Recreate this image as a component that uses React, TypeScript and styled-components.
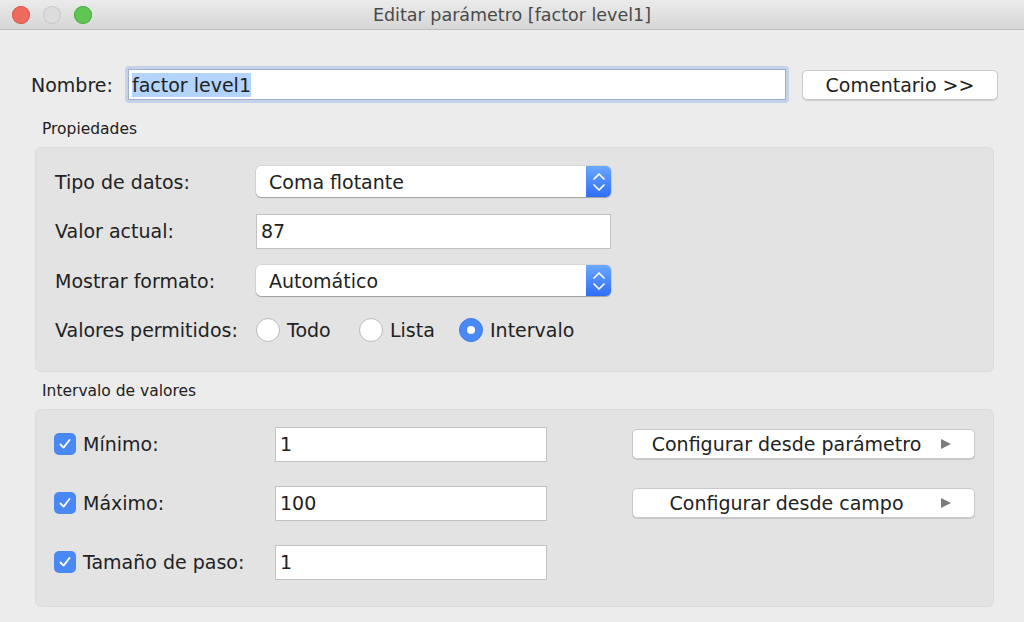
import React from "react";
import styled, { createGlobalStyle } from "styled-components";

const GlobalStyle = createGlobalStyle`
  html, body {
    margin: 0;
    padding: 0;
    background: #ececec;
  }
  body {
    font-family: "DejaVu Sans", "Liberation Sans", sans-serif;
    color: #222;
  }
`;

const Window = styled.div`
  width: 1024px;
  height: 622px;
  display: flex;
  flex-direction: column;
  background: #ececec;
  overflow: hidden;
`;

const TitleBar = styled.div`
  height: 30px;
  flex-shrink: 0;
  display: grid;
  grid-template-columns: 1fr auto 1fr;
  align-items: center;
  background: linear-gradient(#ebebeb, #d6d6d6);
  border-bottom: 1px solid #bdbdbd;
  box-sizing: border-box;
`;

const Lights = styled.div`
  display: flex;
  gap: 13px;
  padding-left: 12px;
`;

const Light = styled.span<{ $color: string; $edge: string }>`
  width: 18px;
  height: 18px;
  border-radius: 50%;
  background: ${(p) => p.$color};
  box-shadow: inset 0 0 0 1px ${(p) => p.$edge};
`;

const Title = styled.div`
  font-size: 17.5px;
  color: #4a4a4a;
`;

const Body = styled.div`
  padding: 36px 30px 0 35px;
  display: flex;
  flex-direction: column;
`;

const NameRow = styled.div`
  display: flex;
  align-items: center;
  margin-right: -4px;
`;

const NameLabel = styled.label`
  font-size: 19px;
  margin-left: -4px;
  width: 94px;
`;

const FocusRing = styled.div`
  flex: 1;
  padding: 3px;
  border-radius: 4px;
  background: #c5d3ea;
  margin-right: 13px;
`;

const NameInput = styled.div`
  height: 29px;
  background: #fff;
  border: 1px solid #9fb0ca;
  display: flex;
  align-items: center;
  padding-left: 3px;
  font-size: 19px;
`;

const Selected = styled.span`
  background: #b3d4fc;
  line-height: 24px;
`;

const PushButton = styled.div<{ $width: number }>`
  width: ${(p) => p.$width}px;
  height: 30px;
  box-sizing: border-box;
  background: #fff;
  border: 1px solid #c9c9c9;
  border-radius: 5px;
  box-shadow: 0 1px 0 rgba(0, 0, 0, 0.12);
  display: flex;
  align-items: center;
  font-size: 19px;
  color: #222;
`;

const ButtonText = styled.span`
  flex: 1;
  text-align: center;
`;

const Arrow = styled.svg`
  margin-right: 22px;
  flex-shrink: 0;
`;

// small caption sitting just above each grouped panel
const SectionTitle = styled.div<{ $height: number }>`
  font-size: 15.5px;
  padding: 0 0 9px 7px;
  height: ${(p) => p.$height}px;
  box-sizing: border-box;
  display: flex;
  align-items: flex-end;
`;

const Panel = styled.div<{ $pad: string }>`
  background: #e3e3e3;
  border: 1px solid #dcdcdc;
  border-radius: 6px;
  padding: ${(p) => p.$pad};
  box-sizing: border-box;
`;

const PropGrid = styled.div`
  display: grid;
  grid-template-columns: 201px 355px;
  grid-auto-rows: 31px;
  row-gap: 18.5px;
  align-items: center;
`;

const FieldLabel = styled.label`
  font-size: 19px;
`;

const SelectBox = styled.div`
  height: 31px;
  display: flex;
  border-radius: 5px;
  background: #fff;
  box-shadow: 0 1px 1px rgba(0, 0, 0, 0.25), 0 0 0 0.5px rgba(0, 0, 0, 0.12);
  overflow: hidden;
`;

const SelectText = styled.span`
  flex: 1;
  padding-left: 13px;
  font-size: 19px;
  display: flex;
  align-items: center;
`;

const Stepper = styled.span`
  width: 25px;
  background: linear-gradient(#6aa8ff, #2f6ef4);
  display: flex;
  align-items: center;
  justify-content: center;
`;

const TextField = styled.div<{ $height: number }>`
  height: ${(p) => p.$height}px;
  box-sizing: border-box;
  background: #fff;
  border: 1px solid #c2c2c2;
  display: flex;
  align-items: center;
  padding-left: 4px;
  font-size: 19px;
`;

const RadioGroup = styled.div`
  display: flex;
  align-items: center;
`;

const RadioItem = styled.div<{ $width: number }>`
  display: flex;
  align-items: center;
  gap: 7px;
  width: ${(p) => p.$width}px;
  font-size: 19px;
`;

const RadioDot = styled.span<{ $on?: boolean }>`
  width: 24px;
  height: 24px;
  box-sizing: border-box;
  border-radius: 50%;
  display: flex;
  align-items: center;
  justify-content: center;
  background: ${(p) => (p.$on ? "#4a88f4" : "#fff")};
  border: 1px solid ${(p) => (p.$on ? "#3f7be6" : "#b9b9b9")};

  &::after {
    content: "";
    display: ${(p) => (p.$on ? "block" : "none")};
    width: 8px;
    height: 8px;
    border-radius: 50%;
    background: #fff;
  }
`;

const RangeGrid = styled.div`
  display: grid;
  grid-template-columns: 221px 272px 85px 343px;
  grid-auto-rows: 35px;
  row-gap: 24px;
  align-items: center;
`;

const CheckLabel = styled.label`
  display: flex;
  align-items: center;
  gap: 7px;
  font-size: 19px;
`;

const CheckBox = styled.span`
  width: 22px;
  height: 22px;
  border-radius: 5px;
  background: #4a88f4;
  display: flex;
  align-items: center;
  justify-content: center;
`;

const Spacer = styled.span``;

const Chevrons = () => (
  <svg width="16" height="28" viewBox="0 0 16 28" fill="none">
    <path d="M3 11 L8 6 L13 11" stroke="#fff" strokeWidth="1.7" strokeLinecap="round" strokeLinejoin="round" />
    <path d="M3 17 L8 22 L13 17" stroke="#fff" strokeWidth="1.7" strokeLinecap="round" strokeLinejoin="round" />
  </svg>
);

const Check = () => (
  <svg width="14" height="14" viewBox="0 0 14 14" fill="none">
    <path d="M2.5 7.5 L5.6 10.6 L11.5 3" stroke="#fff" strokeWidth="1.8" strokeLinecap="round" strokeLinejoin="round" />
  </svg>
);

function Select({ value }: { value: string }) {
  return (
    <SelectBox>
      <SelectText>{value}</SelectText>
      <Stepper>
        <Chevrons />
      </Stepper>
    </SelectBox>
  );
}

function Checked({ label }: { label: string }) {
  return (
    <CheckLabel>
      <CheckBox>
        <Check />
      </CheckBox>
      {label}
    </CheckLabel>
  );
}

function ParamButton({ label }: { label: string }) {
  return (
    <PushButton $width={343}>
      <ButtonText>{label}</ButtonText>
      <Arrow width="12" height="12" viewBox="0 0 12 12">
        <path d="M1 1 L11 6 L1 11 Z" fill="#7c7c7c" />
      </Arrow>
    </PushButton>
  );
}

export default function App() {
  return (
    <Window>
      <GlobalStyle />
      <TitleBar>
        <Lights>
          <Light $color="#ee6a5f" $edge="#d65a50" />
          <Light $color="#dcdcdc" $edge="#c8c8c8" />
          <Light $color="#5fc553" $edge="#4fae45" />
        </Lights>
        <Title>Editar parámetro [factor level1]</Title>
        <span />
      </TitleBar>

      <Body>
        <NameRow>
          <NameLabel>Nombre:</NameLabel>
          <FocusRing>
            <NameInput>
              <Selected>factor level1</Selected>
            </NameInput>
          </FocusRing>
          <PushButton $width={196}>
            <ButtonText>Comentario &gt;&gt;</ButtonText>
          </PushButton>
        </NameRow>

        <SectionTitle $height={44}>Propiedades</SectionTitle>
        <Panel $pad="18px 19px 25px 19px">
          <PropGrid>
            <FieldLabel>Tipo de datos:</FieldLabel>
            <Select value="Coma flotante" />

            <FieldLabel>Valor actual:</FieldLabel>
            <TextField $height={35}>87</TextField>

            <FieldLabel>Mostrar formato:</FieldLabel>
            <Select value="Automático" />

            <FieldLabel>Valores permitidos:</FieldLabel>
            <RadioGroup>
              <RadioItem $width={103}>
                <RadioDot />
                Todo
              </RadioItem>
              <RadioItem $width={100}>
                <RadioDot />
                Lista
              </RadioItem>
              <RadioItem $width={140}>
                <RadioDot $on />
                Intervalo
              </RadioItem>
            </RadioGroup>
          </PropGrid>
        </Panel>

        <SectionTitle $height={37}>Intervalo de valores</SectionTitle>
        <Panel $pad="17px 19px 26px 18px">
          <RangeGrid>
            <Checked label="Mínimo:" />
            <TextField $height={35}>1</TextField>
            <Spacer />
            <ParamButton label="Configurar desde parámetro" />

            <Checked label="Máximo:" />
            <TextField $height={35}>100</TextField>
            <Spacer />
            <ParamButton label="Configurar desde campo" />

            <Checked label="Tamaño de paso:" />
            <TextField $height={35}>1</TextField>
          </RangeGrid>
        </Panel>
      </Body>
    </Window>
  );
}
